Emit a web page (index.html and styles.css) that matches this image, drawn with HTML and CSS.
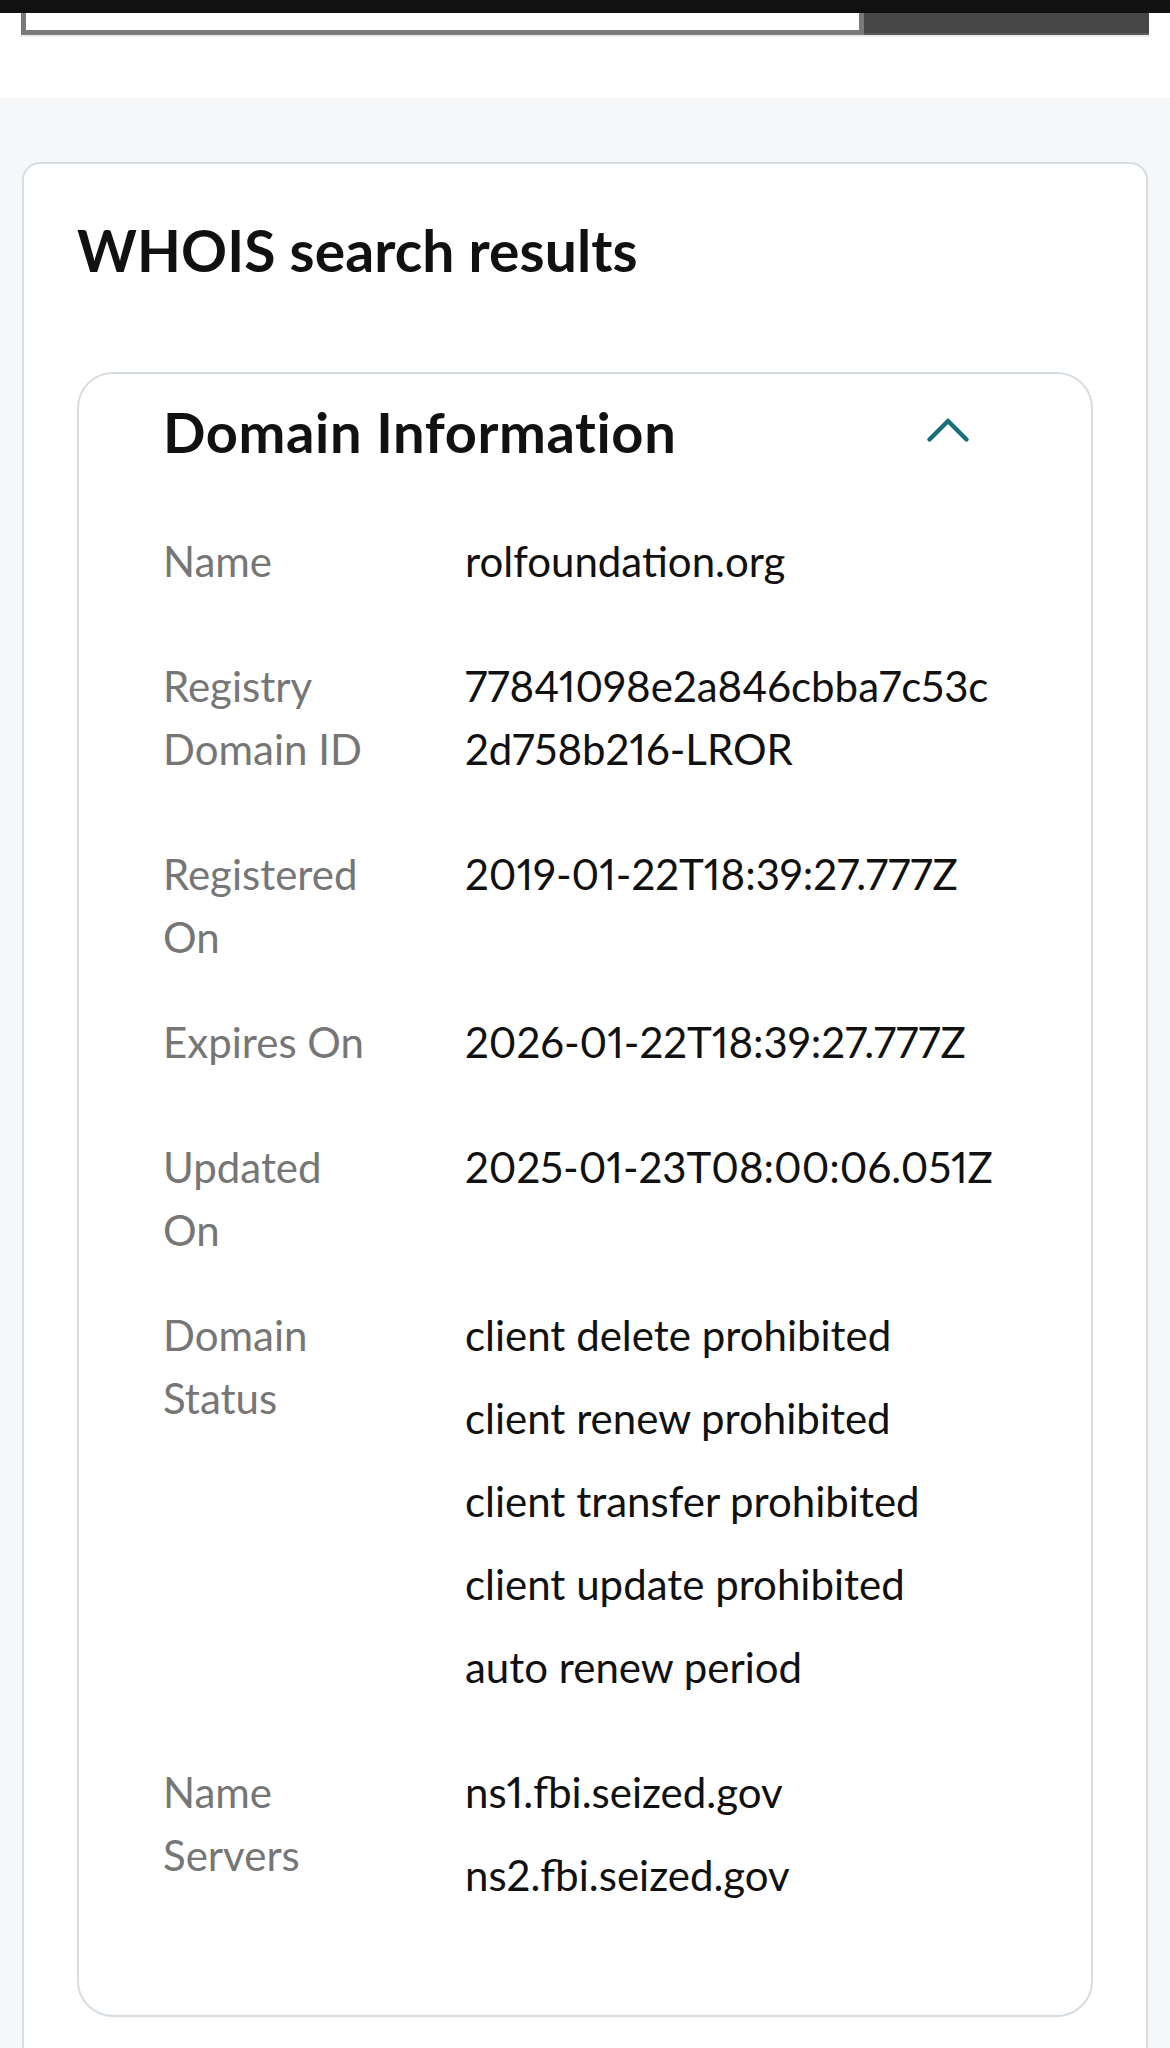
FILE: index.html
```html
<!DOCTYPE html>
<html lang="en">
<head>
<meta charset="utf-8">
<title>WHOIS search results</title>
<link rel="stylesheet" href="styles.css">
</head>
<body>
<header class="site-header">
  <div class="topbar"></div>
  <div class="search">
    <div class="search-input"></div>
    <div class="search-btn"></div>
  </div>
</header>
<main class="page">
  <section class="card">
    <h1 class="card-title">WHOIS search results</h1>
    <div class="panel">
      <div class="panel-head">
        <h2 class="panel-title">Domain Information</h2>
        <svg class="chevron" width="72" height="72" viewBox="0 0 72 72" aria-hidden="true">
          <path d="M17.5 45.5 L36 27 L54.5 45.5" fill="none" stroke="#17707a" stroke-width="4.5" stroke-linecap="round" stroke-linejoin="round"/>
        </svg>
      </div>
      <dl class="rows">
        <div class="row">
          <dt>Name</dt>
          <dd><span class="val">rolfoundation.org</span></dd>
        </div>
        <div class="row">
          <dt>Registry<br>Domain ID</dt>
          <dd><span class="val">77841098e2a846cbba7c53c<br>2d758b216-LROR</span></dd>
        </div>
        <div class="row">
          <dt>Registered<br>On</dt>
          <dd><span class="val">2019-01-22T18:39:27.777Z</span></dd>
        </div>
        <div class="row">
          <dt>Expires On</dt>
          <dd><span class="val">2026-01-22T18:39:27.777Z</span></dd>
        </div>
        <div class="row">
          <dt>Updated<br>On</dt>
          <dd><span class="val">2025-01-23T08:00:06.051Z</span></dd>
        </div>
        <div class="row">
          <dt>Domain<br>Status</dt>
          <dd>
            <span class="val">client delete prohibited</span>
            <span class="val">client renew prohibited</span>
            <span class="val">client transfer prohibited</span>
            <span class="val">client update prohibited</span>
            <span class="val">auto renew period</span>
          </dd>
        </div>
        <div class="row">
          <dt>Name<br>Servers</dt>
          <dd>
            <span class="val">ns1.fbi.seized.gov</span>
            <span class="val">ns2.fbi.seized.gov</span>
          </dd>
        </div>
      </dl>
    </div>
  </section>
</main>
</body>
</html>
```
FILE: styles.css
```css
* { box-sizing: border-box; }

html, body {
  margin: 0;
  padding: 0;
}

body {
  width: 1170px;
  min-height: 2048px;
  background: #f5f7f8;
  font-family: "Lato", "Open Sans", "Liberation Sans", sans-serif;
  color: #111111;
}

.site-header {
  background: #ffffff;
  height: 98px;
}

.topbar {
  height: 13px;
  background: #111111;
}

.search {
  display: flex;
  height: 22px;
  margin: 0 21px 0 21px;
  box-shadow: 0 2px 0 #ececec;
}

.search-input {
  flex: 1;
  background: #ffffff;
  border: 5px solid #7a7a7a;
  border-top: 0;
}

.search-btn {
  width: 285px;
  background: #474747;
  border-bottom: 2px solid #5c5c5c;
}

.page {
  padding: 64px 22px 0 22px;
}

.card {
  background: #ffffff;
  border: 2px solid #d6dde2;
  border-radius: 18px;
  padding: 0 53px 60px 53px;
  min-height: 1900px;
}

.card-title {
  margin: 52px 0 88px 0;
  font-size: 57px;
  line-height: 1.2;
  font-weight: 700;
  letter-spacing: 0.1px;
}

.panel {
  border: 2px solid #d6dde2;
  border-radius: 36px;
  padding: 22px 124px 46px 84px;
}

.panel-head {
  display: flex;
  align-items: center;
  justify-content: space-between;
  margin-bottom: 64px;
}

.panel-title {
  margin: 0;
  font-size: 56px;
  line-height: 1.2;
  font-weight: 700;
  letter-spacing: 0.6px;
}

.chevron {
  display: block;
  margin-right: -17px;
  margin-top: -2px;
}

.rows {
  margin: 0;
}

.row {
  display: grid;
  grid-template-columns: 302px 1fr;
  padding-bottom: 42px;
}

.row dt {
  margin: 0;
  font-size: 42px;
  line-height: 63px;
  color: #767676;
}

.row dd {
  margin: 0;
  display: flex;
  flex-direction: column;
}

.val {
  display: block;
  font-size: 42px;
  line-height: 63px;
  color: #111111;
  margin-bottom: 20px;
  white-space: nowrap;
  font-variant-numeric: proportional-nums;
}
```
